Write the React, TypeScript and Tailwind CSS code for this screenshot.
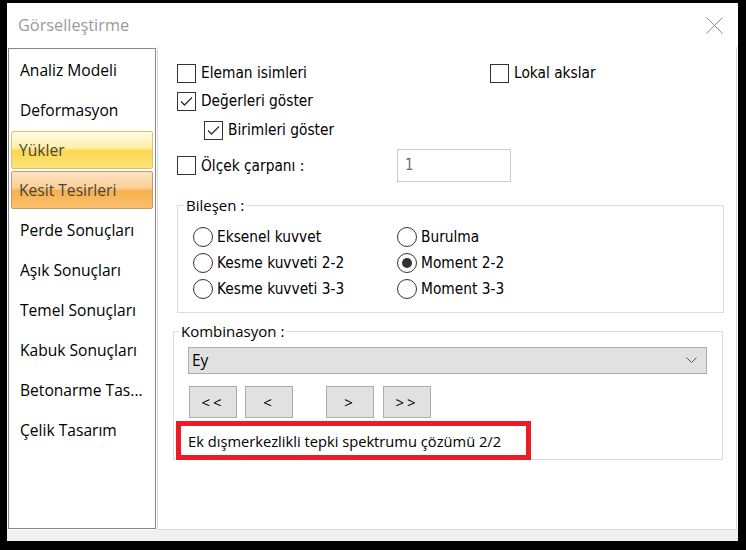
import React from 'react'

const SEG = "font-['Open_Sans',sans-serif]"
const TAH = "font-['DejaVu_Sans_Condensed','DejaVu_Sans',sans-serif]"

const MENU = [
  'Analiz Modeli',
  'Deformasyon',
  'Yükler',
  'Kesit Tesirleri',
  'Perde Sonuçları',
  'Aşık Sonuçları',
  'Temel Sonuçları',
  'Kabuk Sonuçları',
  'Betonarme Tas...',
  'Çelik Tasarım',
]

function Check({ checked, label }: { checked?: boolean; label: string }) {
  return (
    <div className="flex items-center gap-[5px] h-[20px]">
      <span className="w-[19px] h-[19px] border border-[#333] bg-white flex items-center justify-center">
        {checked && (
          <svg width="15" height="15" viewBox="0 0 15 15">
            <polyline points="2,7.5 5.5,11 13,3.5" fill="none" stroke="#333" strokeWidth="1.3" />
          </svg>
        )}
      </span>
      <span className={`${TAH} text-[15.3px] text-black leading-none whitespace-nowrap pt-[2px]`}>{label}</span>
    </div>
  )
}

function Radio({ checked, label }: { checked?: boolean; label: string }) {
  return (
    <div className="flex items-center gap-[4px] h-[20px]">
      <span className="w-[20px] h-[20px] rounded-full border border-[#333] bg-white flex items-center justify-center">
        {checked && <span className="w-[10px] h-[10px] rounded-full bg-[#333]" />}
      </span>
      <span className={`${TAH} text-[15.3px] text-black leading-none whitespace-nowrap pt-[2px]`}>{label}</span>
    </div>
  )
}

function NavButton({ label, className = '' }: { label: string; className?: string }) {
  return (
    <button
      className={`w-[48px] h-[32px] bg-[#e1e1e1] border border-[#adadad] ${SEG} text-[15px] tracking-[3px] text-black flex items-center justify-center ${className}`}
    >
      {label}
    </button>
  )
}

function Sidebar() {
  return (
    <div className="ml-[1px] mt-[1px] w-[148px] h-[481px] border border-[#828790] pt-[1px] flex flex-col">
      {MENU.map((m) => {
        const base = `h-[40px] flex items-center ${SEG} text-[15.6px] whitespace-nowrap`
        if (m === 'Yükler') {
          return (
            <div key={m} className={`${base} px-[2px] py-[1px]`}>
              <div className="w-full h-full flex items-center pl-[7px] pt-[1px] border border-[#dcc172] rounded-[2px] text-[#454545] bg-[linear-gradient(to_bottom,#fffbe4_0%,#fdeea6_45%,#fdd74f_52%,#fde27c_100%)]">
                {m}
              </div>
            </div>
          )
        }
        if (m === 'Kesit Tesirleri') {
          return (
            <div key={m} className={`${base} px-[2px] py-[1px]`}>
              <div className="w-full h-full flex items-center pl-[7px] pt-[1px] border border-[#c19a66] rounded-[2px] text-[#454545] bg-[linear-gradient(to_bottom,#fde3c4_0%,#fbcf94_45%,#f7b04c_52%,#f9c06f_100%)]">
                {m}
              </div>
            </div>
          )
        }
        return (
          <div key={m} className={`${base} pl-[11px] pt-[2px] text-black`}>
            {m}
          </div>
        )
      })}
    </div>
  )
}

function Panel() {
  return (
    <div className="ml-[1px] w-[580px] h-[483px] border-l border-r border-b border-[#dadada] pl-[19px] pt-[16px] flex flex-col">
      <div className="flex">
        <div className="w-[313px]">
          <Check label="Eleman isimleri" />
        </div>
        <Check label="Lokal akslar" />
      </div>
      <div className="mt-[8px]">
        <Check checked label="Değerleri göster" />
      </div>
      <div className="mt-[9px] pl-[27px]">
        <Check checked label="Birimleri göster" />
      </div>
      <div className="mt-[9px] flex items-center h-[33px]">
        <div className="w-[220px]">
          <Check label="Ölçek çarpanı :" />
        </div>
        <div className={`w-[114px] h-[33px] border border-[#cccccc] flex items-center pl-[7px] ${TAH} text-[15px] text-[#6d6d6d]`}>
          1
        </div>
      </div>

      <fieldset className="mt-[13px] w-[547px] border border-[#dcdcdc]">
        <legend className={`ml-[6px] px-[2px] h-[20px] leading-[20px] ${SEG} text-[15px] text-black`}>Bileşen :</legend>
        <div className="mt-[12px] pl-[15px] pb-[13px] grid grid-cols-[204px_1fr] gap-y-[6px]">
          <Radio label="Eksenel kuvvet" />
          <Radio label="Burulma" />
          <Radio label="Kesme kuvveti 2-2" />
          <Radio checked label="Moment 2-2" />
          <Radio label="Kesme kuvveti 3-3" />
          <Radio label="Moment 3-3" />
        </div>
      </fieldset>

      <fieldset className="mt-[8px] -ml-[4px] w-[550px] border border-[#dcdcdc]">
        <legend className={`ml-[5px] px-[2px] h-[20px] leading-[20px] ${SEG} text-[15px] text-black`}>Kombinasyon :</legend>
        <div className={`mt-[6px] ml-[14px] w-[519px] h-[27px] bg-[#e1e1e1] border border-[#adadad] flex items-center justify-between pl-[3px] pr-[9px] ${SEG} text-[15.5px] text-black`}>
          <span>Ey</span>
          <svg width="11" height="7" viewBox="0 0 11 7">
            <polyline points="0.5,0.5 5.5,5.5 10.5,0.5" fill="none" stroke="#555" strokeWidth="1" />
          </svg>
        </div>
        <div className="mt-[12px] ml-[15px] flex">
          <NavButton label="<<" />
          <NavButton label="<" className="ml-[8px]" />
          <NavButton label=">" className="ml-[33px]" />
          <NavButton label=">>" className="ml-[9px]" />
        </div>
        <div className={`relative mt-[3px] ml-[2px] -mb-[1px] w-[355px] h-[39px] border-[5px] border-[#ed1c24] flex items-center pl-[7px] pt-[1px] ${SEG} text-[14.7px] text-black whitespace-nowrap`}>
          Ek dışmerkezlikli tepki spektrumu çözümü 2/2
        </div>
      </fieldset>
    </div>
  )
}

export default function App() {
  return (
    <div className="w-[746px] h-[550px] bg-black pt-[3px] pl-[7px]">
      <div className="w-[731px] h-[538px] bg-white flex flex-col">
        <div className="h-[44px] flex items-center justify-between pl-[11px] pr-[15px]">
          <span className={`${SEG} text-[16.3px] text-[#9a9a9a]`}>Görselleştirme</span>
          <svg width="17" height="17" viewBox="0 0 17 17">
            <line x1="0.5" y1="0.5" x2="16.5" y2="16.5" stroke="#8a8a8a" strokeWidth="1" />
            <line x1="16.5" y1="0.5" x2="0.5" y2="16.5" stroke="#8a8a8a" strokeWidth="1" />
          </svg>
        </div>
        <div className="flex h-[483px]">
          <Sidebar />
          <Panel />
        </div>
        <div className="flex-1 bg-[#f0f0f0]" />
      </div>
    </div>
  )
}
